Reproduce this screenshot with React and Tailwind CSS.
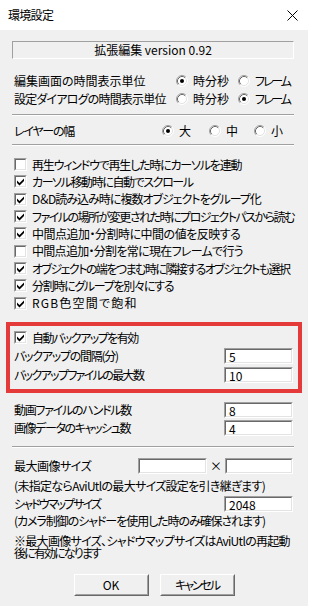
import React from "react";

// classic sunken 2px frame (edit boxes, check boxes)
const Sunken = ({ className = "", children }) => (
  <div className={"border border-t-[#a0a0a0] border-l-[#a0a0a0] border-r-white border-b-white " + className}>
    <div className="h-full w-full border border-t-[#696969] border-l-[#696969] border-r-[#e3e3e3] border-b-[#e3e3e3] bg-white">
      {children}
    </div>
  </div>
);

const CheckBox = ({ checked }) => (
  <Sunken className="w-[13px] h-[13px] shrink-0">
    {checked && (
      <svg width="9" height="9" viewBox="0 0 9 9" className="block">
        <path d="M1 3.5 L3.5 6 L8 1.5 L8 4 L3.5 8.5 L1 6 Z" fill="#000" />
      </svg>
    )}
  </Sunken>
);

const Radio = ({ checked }) => (
  <svg width="12" height="12" viewBox="0 0 12 12" className="shrink-0 block">
    <circle cx="6" cy="6" r="5" fill="#fff" />
    <path d="M2.11 9.89 A5.5 5.5 0 0 1 9.89 2.11" fill="none" stroke="#a0a0a0" strokeWidth="1" />
    <path d="M9.89 2.11 A5.5 5.5 0 0 1 2.11 9.89" fill="none" stroke="#ffffff" strokeWidth="1" />
    <path d="M2.82 9.18 A4.5 4.5 0 0 1 9.18 2.82" fill="none" stroke="#696969" strokeWidth="1" />
    <path d="M9.18 2.82 A4.5 4.5 0 0 1 2.82 9.18" fill="none" stroke="#e3e3e3" strokeWidth="1" />
    {checked && <circle cx="6" cy="6" r="2" fill="#000" />}
  </svg>
);

const Option = ({ checked, label, w = "", tr = "" }) => (
  <div className={"flex items-center gap-[5px] shrink-0 " + w}>
    <Radio checked={checked} />
    <span className={"whitespace-nowrap " + tr}>{label}</span>
  </div>
);

const Edit = ({ value, w = "w-[69px]" }) => (
  <Sunken className={w + " h-[16px] shrink-0"}>
    <div className="pl-[3px] leading-[14px]">{value}</div>
  </Sunken>
);

const Separator = ({ className = "" }) => (
  <div className={"border-t border-t-[#a0a0a0] border-b border-b-white " + className} />
);

const TimeRow = ({ label, sel, tr = "" }) => (
  <div className="flex items-center h-[18px]">
    <span className={"w-[164px] shrink-0 pl-[2px] whitespace-nowrap " + tr}>{label}</span>
    <Option checked={sel === 0} label="時分秒" w="w-[62px]" />
    <Option checked={sel === 1} label="フレーム" tr="tracking-[-2.1px]" />
  </div>
);

const checkItems = [
  { label: "再生ウィンドウで再生した時にカーソルを連動", checked: false, tr: "tracking-[-1.2px]" },
  { label: "カーソル移動時に自動でスクロール", checked: true, tr: "tracking-[-1.4px]" },
  { label: "D＆D読み込み時に複数オブジェクトをグループ化", checked: true, tr: "tracking-[-1px]" },
  { label: "ファイルの場所が変更された時にプロジェクトパスから読む", checked: true, tr: "tracking-[-1.5px]" },
  { label: "中間点追加・分割時に中間の値を反映する", checked: true, tr: "tracking-[-0.5px]" },
  { label: "中間点追加・分割を常に現在フレームで行う", checked: false, tr: "tracking-[-0.7px]" },
  { label: "オブジェクトの端をつまむ時に隣接するオブジェクトも選択", checked: true, tr: "tracking-[-1.55px]" },
  { label: "分割時にグループを別々にする", checked: true, tr: "tracking-[-1.3px]" },
  { label: "RGB色空間で飽和", checked: true, tr: "tracking-[1.2px]" },
];

const InputRow = ({ label, value, tr = "", className = "" }) => (
  <div className={"flex items-center justify-between h-[16px] " + className}>
    <span className={"whitespace-nowrap " + tr}>{label}</span>
    <Edit value={value} />
  </div>
);

const Button = ({ children }) => (
  <button className="w-[75px] h-[22px] border border-t-white border-l-white border-r-[#696969] border-b-[#696969] bg-[#f0f0f0]">
    <div className="h-full w-full flex items-center justify-center border border-t-[#f0f0f0] border-l-[#f0f0f0] border-r-[#a0a0a0] border-b-[#a0a0a0]">
      {children}
    </div>
  </button>
);

export default function App() {
  return (
    <div className="w-[308px] h-[606px] bg-[#f0f0f0] text-black text-[12px] leading-[12px] font-['Noto_Sans_CJK_JP',sans-serif] [font-feature-settings:'palt'] overflow-hidden">
      {/* title bar */}
      <div className="h-[30px] bg-white flex items-center justify-between pl-[8px] pr-[10px]">
        <span className="tracking-[-0.7px]">環境設定</span>
        <svg width="11" height="11" viewBox="0 0 11 11">
          <path d="M0.5 0.5 L10.5 10.5 M10.5 0.5 L0.5 10.5" stroke="#000" strokeWidth="1" />
        </svg>
      </div>

      <div className="pl-[12px] pr-[14px]">
        {/* version */}
        <div className="mt-[11px] h-[18px] border border-t-[#a0a0a0] border-l-[#a0a0a0] border-r-white border-b-white flex items-center justify-center">
          拡張編集 version 0.92
        </div>

        <div className="mt-[13px]">
          <TimeRow label="編集画面の時間表示単位" sel={0} />
          <TimeRow label="設定ダイアログの時間表示単位" sel={1} tr="tracking-[-0.8px]" />
        </div>

        <Separator className="mt-[6px]" />

        <div className="mt-[6px] flex items-center h-[18px]">
          <span className="w-[150px] shrink-0 pl-[2px] tracking-[-1.25px]">レイヤーの幅</span>
          <Option checked label="大" w="w-[47px]" />
          <Option label="中" w="w-[45px]" />
          <Option label="小" />
        </div>

        <Separator className="mt-[4px]" />

        <div className="mt-[10px]">
          {checkItems.map((item) => (
            <div key={item.label} className="flex items-center h-[17.33px] pl-[2px] gap-[5px]">
              <CheckBox checked={item.checked} />
              <span className={"whitespace-nowrap " + item.tr}>{item.label}</span>
            </div>
          ))}
        </div>

        {/* auto backup (highlighted) */}
        <div className="mt-[10px] -ml-[6px] -mr-[8px] border-[4px] border-[#e53a3a] pl-[4px] pr-[5px] pb-[6px]">
          <div className="mt-[3px] flex items-center h-[18px] gap-[5px]">
            <CheckBox checked />
            <span className="tracking-[-1.5px]">自動バックアップを有効</span>
          </div>
          <InputRow className="mt-[1px]" label="バックアップの間隔(分)" value="5" tr="tracking-[-1.25px]" />
          <InputRow className="mt-[3px]" label="バックアップファイルの最大数" value="10" tr="tracking-[-1.65px]" />
        </div>

        <div className="pl-[2px] pr-[1px]">
          <InputRow className="mt-[9px]" label="動画ファイルのハンドル数" value="8" tr="tracking-[-1.25px]" />
          <InputRow className="mt-[2px]" label="画像データのキャッシュ数" value="4" tr="tracking-[-1.4px]" />
        </div>

        <Separator className="mt-[10px]" />

        <div className="pl-[2px] pr-[1px]">
          <div className="mt-[10px] flex items-center h-[17px]">
            <span className="flex-1 tracking-[-0.5px]">最大画像サイズ</span>
            <Edit value="" />
            <span className="w-[18px] text-center">×</span>
            <Edit value="" w="w-[68px]" />
          </div>
          <div className="mt-[5px] h-[12px] whitespace-nowrap tracking-[-0.68px]">
            (未指定ならAviUtlの最大サイズ設定を引き継ぎます)
          </div>
          <InputRow className="mt-[4px]" label="シャドウマップサイズ" value="2048" tr="tracking-[-1.9px]" />
          <div className="mt-[3px] h-[12px] whitespace-nowrap tracking-[-1.06px]">
            (カメラ制御のシャドーを使用した時のみ確保されます)
          </div>
          <div className="mt-[8px] leading-[12px] whitespace-nowrap">
            <div className="tracking-[-0.69px]">※最大画像サイズ、シャドウマップサイズはAviUtlの再起動</div>
            <div className="tracking-[-1.87px]">後に有効になります</div>
          </div>
        </div>

        <div className="mt-[15px] flex justify-center gap-[11px] pl-[2px]">
          <Button>OK</Button>
          <Button>
            <span className="tracking-[-2.1px]">キャンセル</span>
          </Button>
        </div>
      </div>
    </div>
  );
}
